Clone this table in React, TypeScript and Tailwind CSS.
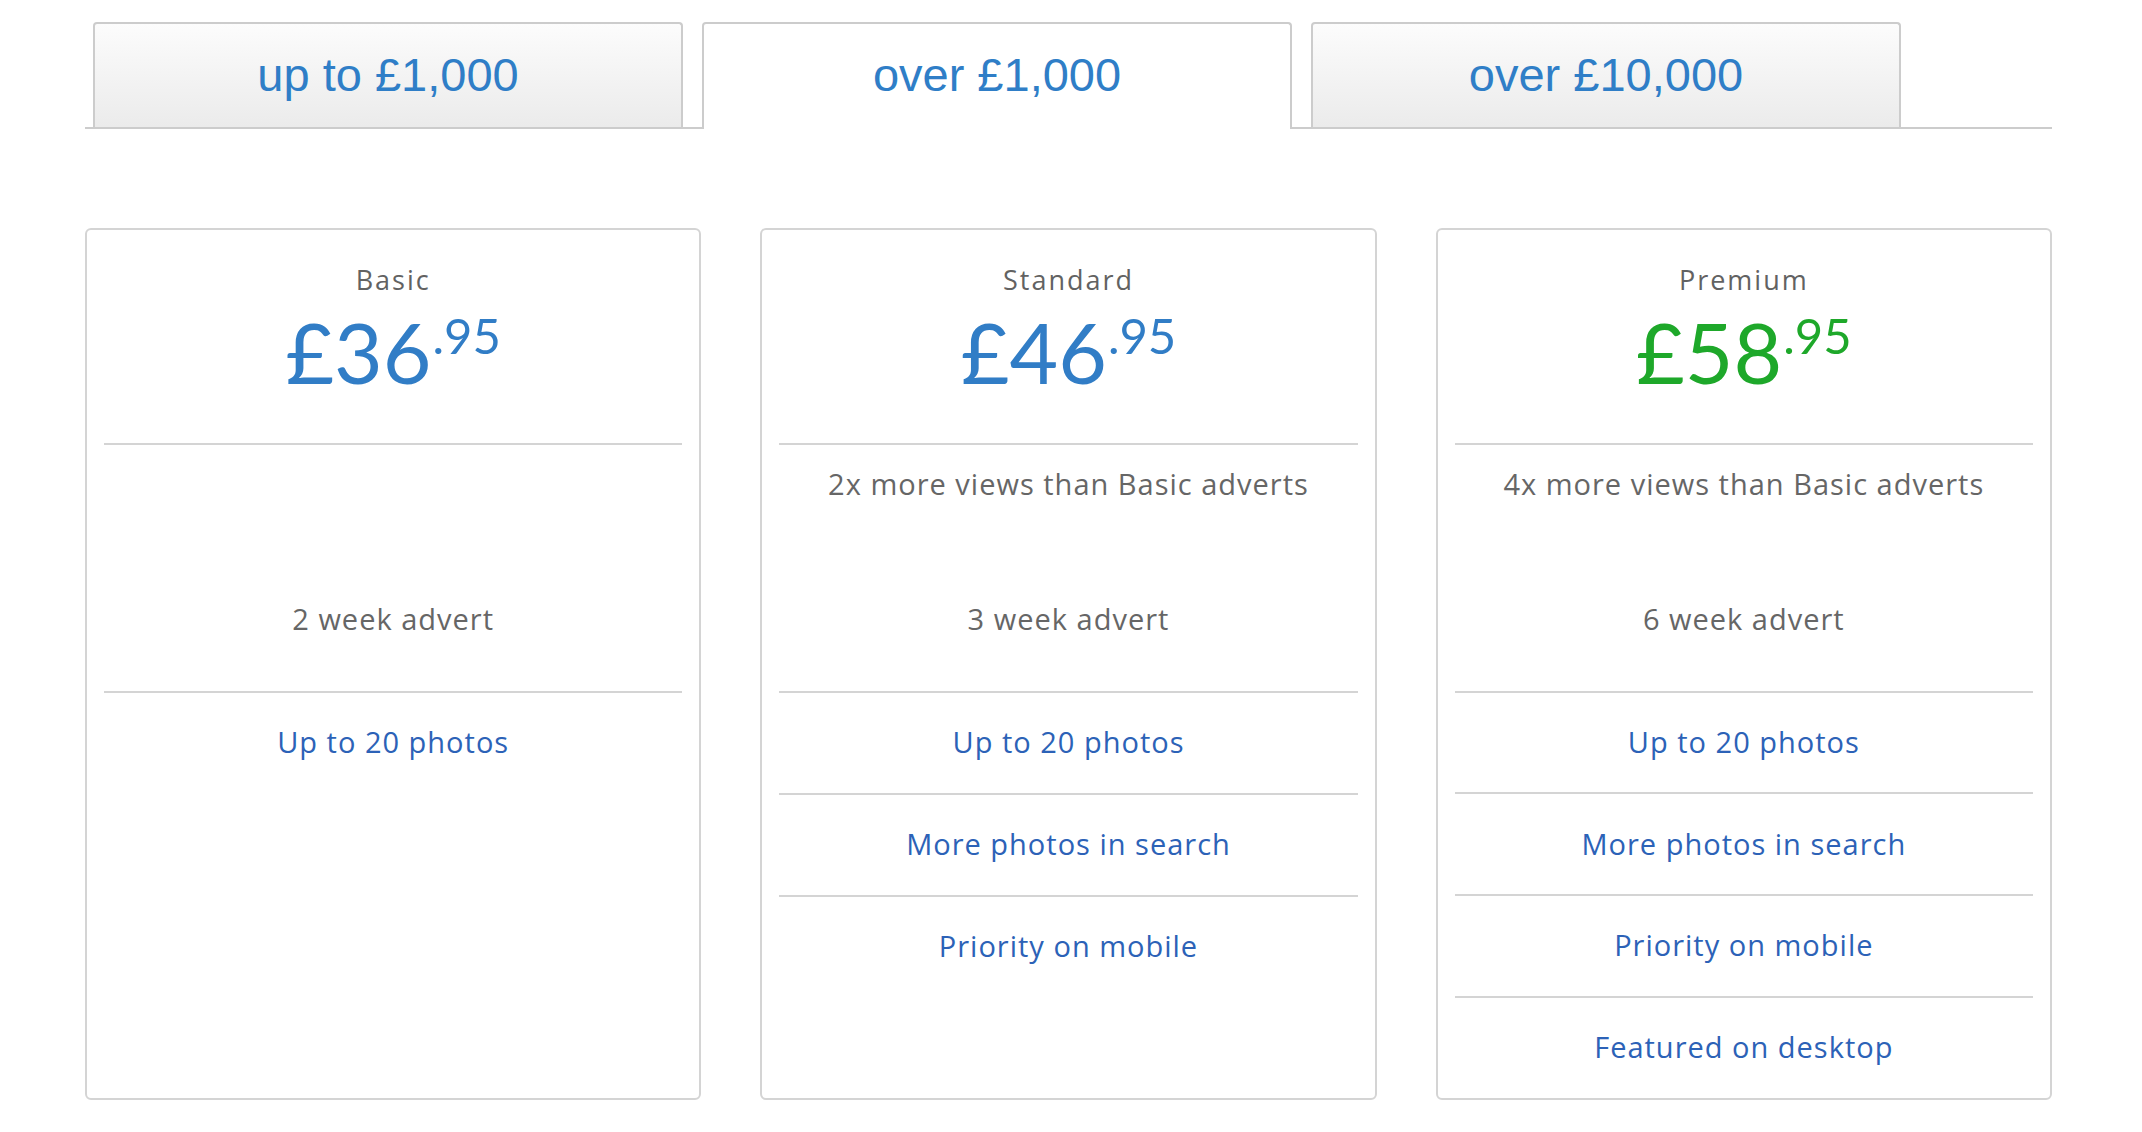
import React from "react";

type Plan = {
  name: string;
  pounds: string;
  pence: string;
  green?: boolean;
  views: string;
  weeks: string;
  features: string[];
};

const plans: Plan[] = [
  { name: "Basic", pounds: "£36", pence: ".95", views: "", weeks: "2 week advert", features: ["Up to 20 photos"] },
  {
    name: "Standard",
    pounds: "£46",
    pence: ".95",
    views: "2x more views than Basic adverts",
    weeks: "3 week advert",
    features: ["Up to 20 photos", "More photos in search", "Priority on mobile"],
  },
  {
    name: "Premium",
    pounds: "£58",
    pence: ".95",
    green: true,
    views: "4x more views than Basic adverts",
    weeks: "6 week advert",
    features: ["Up to 20 photos", "More photos in search", "Priority on mobile", "Featured on desktop"],
  },
];

const tabs = ["up to £1,000", "over £1,000", "over £10,000"];

function Card({ p }: { p: Plan }) {
  return (
    <div className="flex h-[872px] flex-col rounded-[6px] border-2 border-[#d4d4d4] bg-white px-[17px]">
      <div className="flex h-[213px] flex-col items-center">
        <div className="mt-[31px] text-[27px] leading-[38px] tracking-[2px] text-[#626262]">{p.name}</div>
        <div
          className={`mt-[9px] flex items-start ${p.green ? "text-[#1ea82a]" : "text-[#317dc6]"}`}
          style={{ fontFamily: "Lato, sans-serif" }}
        >
          <span className="text-[84px] leading-[88px]">{p.pounds}</span>
          <span className="mt-[3px] ml-[1px] text-[49px] leading-[49px]">{p.pence}</span>
        </div>
      </div>
      <div className="flex h-[248px] flex-col items-center justify-between border-t-2 border-[#d4d4d4] pb-[52px] pt-[19px] text-[29px] leading-[40px] tracking-[1px] text-[#666666]">
        <div>{p.views}</div>
        <div>{p.weeks}</div>
      </div>
      {p.features.map((f) => (
        <div
          key={f}
          className="flex h-[102px] items-center justify-center border-t-2 border-[#d4d4d4] pb-[2px] text-[29px] tracking-[1px] text-[#2c62b7]"
        >
          {f}
        </div>
      ))}
    </div>
  );
}

export default function App() {
  return (
    <div className="min-h-[1132px] w-full bg-white" style={{ fontFamily: "'Open Sans', 'Noto Sans', sans-serif" }}>
      <div className="ml-[85px] w-[1967px] pt-[22px]">
        <div className="flex items-end gap-[19px] border-b-2 border-[#cccccc] pl-[8px]">
          {tabs.map((t, i) => {
            const active = i === 1;
            return (
              <div
                key={t}
                className={`flex w-[590px] items-center justify-center rounded-t-[4px] border-2 border-b-0 border-[#cccccc] text-[47px] text-[#2f7ec7] ${
                  active
                    ? "relative -mb-[2px] h-[107px] bg-white pb-[2px]"
                    : "h-[105px] bg-gradient-to-b from-[#fcfcfc] to-[#ebebeb]"
                }`}
                style={{ fontFamily: "'Liberation Sans', Arial, sans-serif" }}
              >
                {t}
              </div>
            );
          })}
        </div>
        <div className="mt-[99px] grid grid-cols-3 gap-[59px]">
          {plans.map((p) => (
            <Card key={p.name} p={p} />
          ))}
        </div>
      </div>
    </div>
  );
}
